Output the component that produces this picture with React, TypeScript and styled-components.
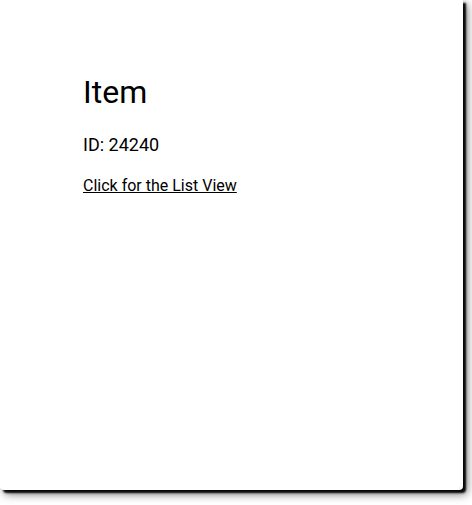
import React from "react";
import styled, { createGlobalStyle } from "styled-components";

const Global = createGlobalStyle`
  html, body { margin: 0; padding: 0; background: #ffffff; }
  body { font-family: Roboto, "Liberation Sans", sans-serif; color: #000; }
`;

const Page = styled.div`
  width: 472px;
  height: 505px;
  overflow: hidden;
  background: #fff;
`;

const Card = styled.div`
  width: 463px;
  height: 490px;
  background: #fff;
  box-shadow: 4px 4px 10px rgba(0, 0, 0, 0.55), 3px 3px 2px rgba(0, 0, 0, 0.95);
  border-radius: 0 0 4px 4px;
  box-sizing: border-box;
  padding: 72px 0 0 83px;
  display: flex;
  flex-direction: column;
`;

const Title = styled.h1`
  margin: 0;
  font-size: 32px;
  font-weight: 400;
  line-height: 40px;
`;

const IdLine = styled.p`
  margin: 22px 0 0 0;
  font-size: 18px;
  line-height: 22px;
`;

const ListLink = styled.a`
  margin-top: 20px;
  font-size: 16px;
  line-height: 20px;
  color: #000;
  text-decoration: underline;
  align-self: flex-start;
`;

export default function App() {
  return (
    <Page>
      <Global />
      <Card>
        <Title>Item</Title>
        <IdLine>ID: 24240</IdLine>
        <ListLink href="#">Click for the List View</ListLink>
      </Card>
    </Page>
  );
}
